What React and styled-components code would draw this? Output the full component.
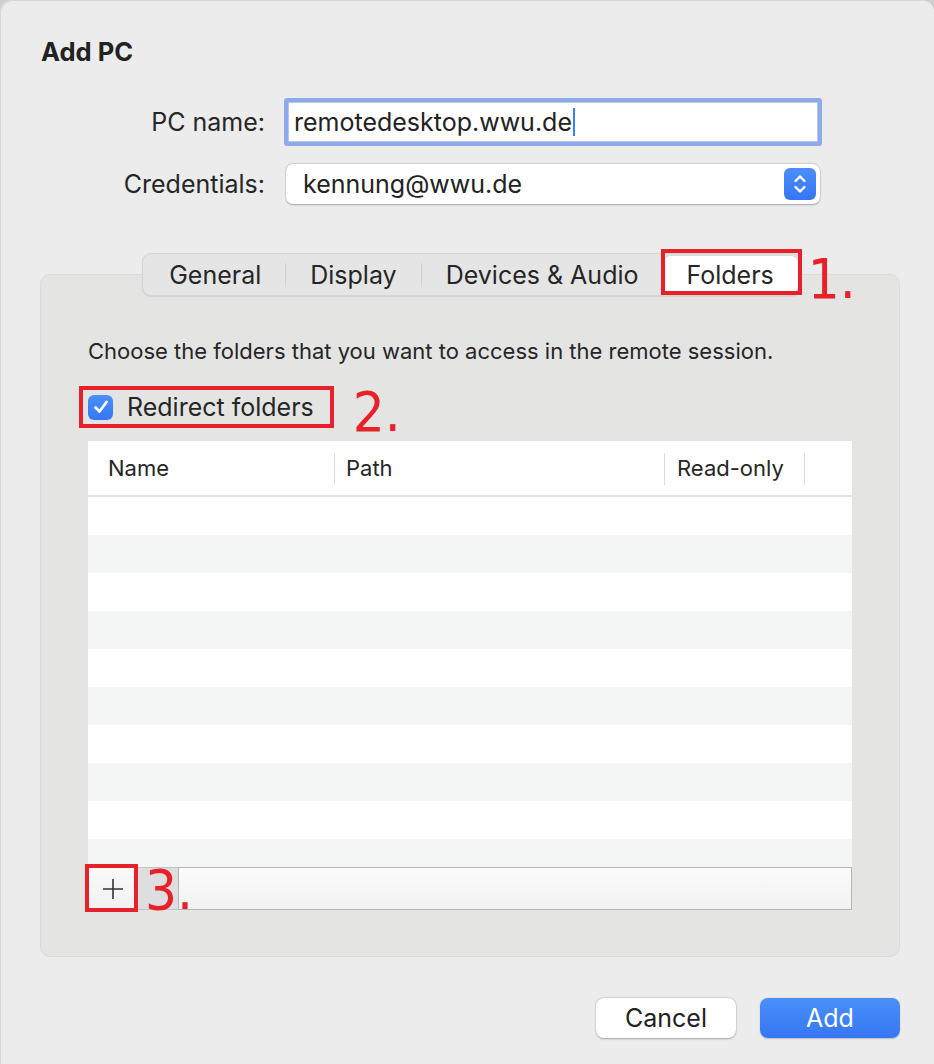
import React from "react";
import styled, { createGlobalStyle, css } from "styled-components";

const GlobalStyle = createGlobalStyle`
  html, body {
    margin: 0;
    padding: 0;
    background: #cfcfcf;
  }
  body {
    font-family: Inter, "Noto Sans", "Liberation Sans", sans-serif;
    color: #242424;
    -webkit-font-smoothing: antialiased;
  }
`;

const RED = "#e8202a";

const Window = styled.div`
  box-sizing: border-box;
  width: 934px;
  height: 1064px;
  background: #ececec;
  border-top-left-radius: 12px;
  border-top-right-radius: 12px;
  box-shadow: inset 1px 1px 0 #d6d6d6;
  display: flex;
  flex-direction: column;
  overflow: hidden;
`;

const Title = styled.h1`
  margin: 36px 0 0 41px;
  font-size: 25.5px;
  line-height: 32px;
  font-weight: 700;
  color: #222;
`;

const Form = styled.div`
  display: grid;
  grid-template-columns: 265px 1fr;
  column-gap: 19px;
  row-gap: 18px;
  align-items: center;
  margin: 30px 112px 0 0;
`;

const Label = styled.label`
  text-align: right;
  font-size: 25px;
  color: #262626;
`;

const TextField = styled.div`
  box-sizing: border-box;
  height: 40px;
  margin: 4px;
  background: #fff;
  border: 1px solid #b7c6ea;
  box-shadow: 0 0 0 4px #8eaaea;
  border-radius: 1px;
  display: flex;
  align-items: center;
  padding-left: 5px;
  font-size: 25px;
  color: #222;
`;

const Caret = styled.span`
  display: inline-block;
  width: 2px;
  height: 28px;
  margin-left: 1px;
  background: #3a7cf5;
`;

const Popup = styled.div`
  box-sizing: border-box;
  height: 40px;
  margin: 0 2px;
  background: #fff;
  border-radius: 7px;
  box-shadow: 0 0.5px 2px rgba(0, 0, 0, 0.28), 0 0 0 0.5px rgba(0, 0, 0, 0.08);
  display: flex;
  align-items: center;
  justify-content: space-between;
  padding: 0 4px 0 17px;
  font-size: 25px;
  color: #222;
`;

const Stepper = styled.span`
  width: 32px;
  height: 32px;
  border-radius: 6px;
  background: linear-gradient(#4b8ff8, #3477f4);
  display: flex;
  align-items: center;
  justify-content: center;
`;

const Panel = styled.section`
  box-sizing: border-box;
  margin: 70px 34px 0 40px;
  background: #e4e4e3;
  border: 1px solid #dadada;
  border-radius: 10px;
  padding: 0 47px 46px 47px;
  display: flex;
  flex-direction: column;
`;

const Tabs = styled.div`
  align-self: center;
  margin: -22px 0 0 3px;
  height: 43px;
  box-sizing: border-box;
  display: flex;
  align-items: center;
  background: #e5e5e5;
  border: 1px solid #d4d4d4;
  border-radius: 9px;
  box-shadow: 0 0.5px 1px rgba(0, 0, 0, 0.08);
  padding: 0 2px;
`;

const Tab = styled.div`
  position: relative;
  height: 37px;
  display: flex;
  align-items: center;
  padding: 0 24px;
  font-size: 25px;
  color: #262626;
  border-radius: 7px;
  ${(p) =>
    p.$active &&
    css`
      background: #fff;
      box-shadow: 0 0.5px 2px rgba(0, 0, 0, 0.22);
    `}
`;

const TabDivider = styled.span`
  width: 1px;
  height: 24px;
  background: #d0d0d0;
`;

const Marker = styled.span`
  position: absolute;
  top: ${(p) => p.$top}px;
  left: ${(p) => p.$left}px;
  right: ${(p) => p.$right}px;
  bottom: ${(p) => p.$bottom}px;
  border: 4px solid ${RED};
  pointer-events: none;
`;

const Num = styled.span`
  position: absolute;
  top: ${(p) => p.$top}px;
  left: calc(100% + ${(p) => p.$gap}px);
  font-family: "Liberation Sans Narrow", "DejaVu Sans Condensed", "Liberation Sans", sans-serif;
  font-stretch: condensed;
  font-size: 56px;
  line-height: 56px;
  color: ${RED};
  white-space: nowrap;
`;

const Description = styled.p`
  margin: 42px 0 0 0;
  font-size: 22px;
  line-height: 26px;
  color: #262626;
`;

const CheckRow = styled.label`
  position: relative;
  align-self: flex-start;
  margin-top: 28px;
  display: flex;
  align-items: center;
  gap: 14px;
  font-size: 25px;
  line-height: 30px;
  color: #262626;
`;

const CheckBox = styled.span`
  width: 25px;
  height: 25px;
  border-radius: 6px;
  background: linear-gradient(#4b8ff8, #3477f4);
  display: flex;
  align-items: center;
  justify-content: center;
`;

const Table = styled.div`
  margin-top: 19px;
  background: #fff;
`;

const HeaderRow = styled.div`
  display: grid;
  grid-template-columns: 247px 330px 140px 1fr;
  height: 54px;
  border-bottom: 2px solid #e3e3e3;
`;

const HeaderCell = styled.div`
  position: relative;
  display: flex;
  align-items: center;
  padding-left: ${(p) => p.$pad}px;
  font-size: 22px;
  color: #262626;
  &::after {
    content: "";
    display: ${(p) => (p.$sep ? "block" : "none")};
    position: absolute;
    right: 0;
    top: 12px;
    bottom: 10px;
    width: 1px;
    background: #dcdcdc;
  }
`;

const Body = styled.div`
  height: 370px;
  overflow: hidden;
`;

const Row = styled.div`
  height: 38px;
  background: ${(p) => (p.$alt ? "#f4f5f5" : "#fff")};
`;

const BottomBar = styled.div`
  display: flex;
  height: 43px;
`;

const BarButton = styled.span`
  position: relative;
  box-sizing: border-box;
  width: 48px;
  display: flex;
  align-items: center;
  justify-content: center;
  border: 1px solid #b9b9b9;
  border-right: none;
  background: linear-gradient(#fafafa, #f1f1f1);
`;

const BarGap = styled.span`
  box-sizing: border-box;
  width: 42px;
  border-top: 1px solid #c4c4c4;
  border-bottom: 1px solid #c4c4c4;
  background: #dedede;
`;

const BarFill = styled.span`
  flex: 1;
  box-sizing: border-box;
  border: 1.5px solid #b5b5b5;
  background: linear-gradient(#fbfbfb, #f2f2f2);
`;

const Footer = styled.div`
  display: flex;
  justify-content: flex-end;
  gap: 24px;
  margin: 41px 34px 0 0;
`;

const Button = styled.button`
  width: 140px;
  height: 40px;
  border: none;
  border-radius: 8px;
  font-family: inherit;
  font-size: 25px;
  ${(p) =>
    p.$primary
      ? css`
          background: linear-gradient(#4b8ff8, #3577f4);
          color: #fff;
          box-shadow: 0 0.5px 1.5px rgba(0, 0, 0, 0.2);
        `
      : css`
          background: #fff;
          color: #222;
          box-shadow: 0 0.5px 2px rgba(0, 0, 0, 0.3), 0 0 0 0.5px rgba(0, 0, 0, 0.06);
        `}
`;

const Chevrons = () => (
  <svg width="16" height="24" viewBox="0 0 16 24" fill="none" stroke="#fff" strokeWidth="2.4" strokeLinecap="round" strokeLinejoin="round">
    <path d="M3.5 9 L8 4.5 L12.5 9" />
    <path d="M3.5 15 L8 19.5 L12.5 15" />
  </svg>
);

const Check = () => (
  <svg width="18" height="18" viewBox="0 0 18 18" fill="none" stroke="#fff" strokeWidth="2.8" strokeLinecap="round" strokeLinejoin="round">
    <path d="M3.5 9.5 L7.5 13.5 L14.5 4" />
  </svg>
);

const Plus = () => (
  <svg width="22" height="22" viewBox="0 0 22 22" stroke="#333" strokeWidth="1.6">
    <path d="M11 1 V21 M1 11 H21" />
  </svg>
);

const rows = Array.from({ length: 10 }, (_, i) => i);

export default function App() {
  return (
    <>
      <GlobalStyle />
      <Window>
        <Title>Add PC</Title>
        <Form>
          <Label>PC name:</Label>
          <TextField>
            remotedesktop.wwu.de
            <Caret />
          </TextField>
          <Label>Credentials:</Label>
          <Popup>
            <span>kennung@wwu.de</span>
            <Stepper>
              <Chevrons />
            </Stepper>
          </Popup>
        </Form>

        <Panel>
          <Tabs>
            <Tab>General</Tab>
            <TabDivider />
            <Tab>Display</Tab>
            <TabDivider />
            <Tab>Devices &amp; Audio</Tab>
            <Tab $active>
              Folders
              <Marker $top={-7} $left={-2} $right={-4} $bottom={-2} />
              <Num $top={-5} $gap={10}>1.</Num>
            </Tab>
          </Tabs>

          <Description>Choose the folders that you want to access in the remote session.</Description>

          <CheckRow>
            <CheckBox>
              <Check />
            </CheckBox>
            Redirect folders
            <Marker $top={-6} $left={-9} $right={-20} $bottom={-6} />
            <Num $top={-8} $gap={39}>2.</Num>
          </CheckRow>

          <Table>
            <HeaderRow>
              <HeaderCell $pad={20} $sep>Name</HeaderCell>
              <HeaderCell $pad={11} $sep>Path</HeaderCell>
              <HeaderCell $pad={12} $sep>Read-only</HeaderCell>
              <HeaderCell />
            </HeaderRow>
            <Body>
              {rows.map((i) => (
                <Row key={i} $alt={i % 2 === 1} />
              ))}
            </Body>
          </Table>

          <BottomBar>
            <BarButton>
              <Plus />
              <Marker $top={-4} $left={-4} $right={-2} $bottom={-3} />
              <Num $top={-6} $gap={9}>3.</Num>
            </BarButton>
            <BarGap />
            <BarFill />
          </BottomBar>
        </Panel>

        <Footer>
          <Button>Cancel</Button>
          <Button $primary>Add</Button>
        </Footer>
      </Window>
    </>
  );
}
